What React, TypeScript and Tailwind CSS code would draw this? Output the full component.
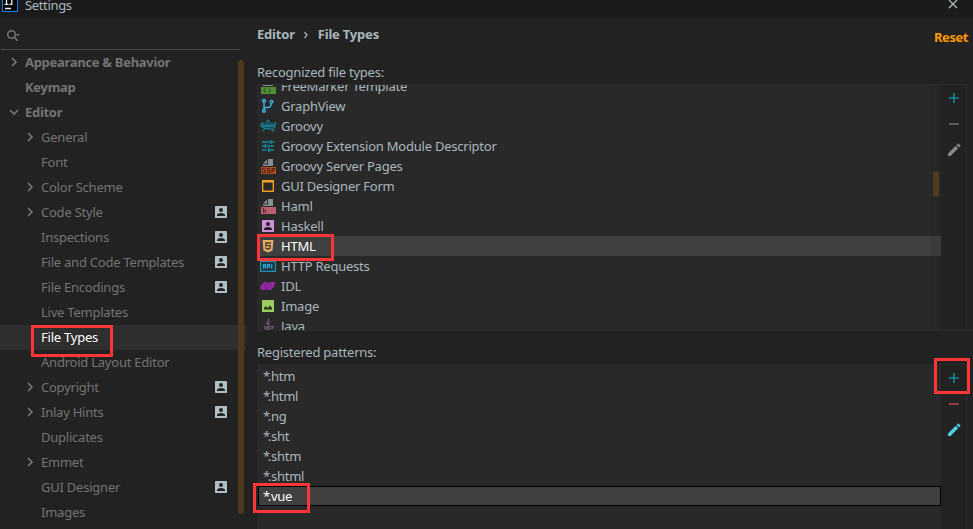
import React from "react";

type TreeItem = {
  label: string;
  level: 0 | 1;
  arrow?: "right" | "down";
  project?: boolean;
  selected?: boolean;
};

const tree: TreeItem[] = [
  { label: "Appearance & Behavior", level: 0, arrow: "right" },
  { label: "Keymap", level: 0 },
  { label: "Editor", level: 0, arrow: "down" },
  { label: "General", level: 1, arrow: "right" },
  { label: "Font", level: 1 },
  { label: "Color Scheme", level: 1, arrow: "right" },
  { label: "Code Style", level: 1, arrow: "right", project: true },
  { label: "Inspections", level: 1, project: true },
  { label: "File and Code Templates", level: 1, project: true },
  { label: "File Encodings", level: 1, project: true },
  { label: "Live Templates", level: 1 },
  { label: "File Types", level: 1, selected: true },
  { label: "Android Layout Editor", level: 1 },
  { label: "Copyright", level: 1, arrow: "right", project: true },
  { label: "Inlay Hints", level: 1, arrow: "right", project: true },
  { label: "Duplicates", level: 1 },
  { label: "Emmet", level: 1, arrow: "right" },
  { label: "GUI Designer", level: 1, project: true },
  { label: "Images", level: 1 },
];

function Chevron({ dir }: { dir: "right" | "down" }) {
  return (
    <svg width="10" height="10" viewBox="0 0 10 10" fill="none" stroke="#777" strokeWidth="1.6">
      <path d={dir === "right" ? "M3 1l4 4-4 4" : "M1 3l4 4 4-4"} />
    </svg>
  );
}

function Person({ color, size }: { color: string; size: number }) {
  return (
    <svg width={size} height={size} viewBox="0 0 12 12">
      <rect width="12" height="12" rx="0.7" fill={color} />
      <circle cx="6" cy="4.1" r="2" fill="#222" />
      <path d="M2 10V9c0-1.4 2.2-2.1 4-2.1S10 7.600 10 9v1z" fill="#222" />
    </svg>
  );
}

function Icon({ children }: { children: React.ReactNode }) {
  return (
    <svg width="16" height="16" viewBox="0 0 16 16" fill="none" className="shrink-0">
      {children}
    </svg>
  );
}

const page = (
  <>
    <path d="M8 1h5v7H3V6.500h5z" fill="#848e93" />
    <path d="M3 5.500L7 1.500v4z" fill="#848e93" />
  </>
);

const fileTypes: { label: string; icon: React.ReactNode }[] = [
  {
    label: "FreeMarker Template",
    icon: (
      <Icon>
        {page}
        <path d="M1 9h15v7H1z" fill="#4f8f36" />
        <path d="M6 10.500L3.500 12.500 6 14.500M8.500 10.500l2.500 2-2.500 2" stroke="#263a1d" />
      </Icon>
    ),
  },
  {
    label: "GraphView",
    icon: (
      <Icon>
        <g stroke="#40b6e8" strokeWidth="1.400">
          <circle cx="4" cy="2.800" r="1.400" />
          <circle cx="11.500" cy="3.800" r="1.400" />
          <circle cx="4" cy="12.800" r="1.400" />
          <path d="M4 4.200v7.200M4 9.500h3.500c2.500 0 3.700-1.500 3.900-4.300" />
        </g>
      </Icon>
    ),
  },
  {
    label: "Groovy",
    icon: (
      <Icon>
        <path d="M4.500 5l2.200-1.200L8 2l1.400 1.800L12 5l3.500-1v6.500l-2.800-.3 1.300 3-3.800-2.200L8 10.700 2.500 13.500 4 10.500 1 10 0 8l1-3 1.500-1z" fill="#154c5a" />
        <path d="M3.800 5H2L1 7.500l1 1.500h2V7.200H2.700M5.500 9V7.300l1.500-.5M7.500 7h1.200v1.600H7.500zM9.800 7H11v1.600H9.800zM11.800 6.500l.8 2 1-2M15 6.500L14.200 10M2.500 13.500L5 10l3 .7 2.500.3 3.500 2.200-1.300-3M6 4.500L8 2l2 2.500M15.300 4v3" stroke="#2797ad" strokeWidth=".8" />
      </Icon>
    ),
  },
  {
    label: "Groovy Extension Module Descriptor",
    icon: (
      <Icon>
        <path d="M2 4h7M10.500 4H14M2 8h3.500M7 8h7M2 12h4.500M9 12h5M10.500 2v4M5.500 6v4M8.700 10v4" stroke="#118da0" strokeWidth="1.500" />
      </Icon>
    ),
  },
  {
    label: "Groovy Server Pages",
    icon: (
      <Icon>
        {page}
        <path d="M1 9h15v7H1z" fill="#b04d22" />
        <path d="M5.500 10.500h-3v4h3v-2H4M10 10.500H7.500v2H10v2H7M12 15v-4.500h2.500v2.200H12" stroke="#4a2111" />
      </Icon>
    ),
  },
  {
    label: "GUI Designer Form",
    icon: (
      <Icon>
        <path d="M2.700 2.700h10.600v10.600H2.700z" stroke="#f2a01f" strokeWidth="1.400" />
        <path d="M2 2h12v2.500H2z" fill="#f2a01f" />
      </Icon>
    ),
  },
  {
    label: "Haml",
    icon: (
      <Icon>
        {page}
        <path d="M1 9h15v7H1z" fill="#b96070" />
        <path d="M3.500 10v5M3.500 12.300h2V15" stroke="#542832" />
      </Icon>
    ),
  },
  {
    label: "Haskell",
    icon: (
      <span className="flex size-4 shrink-0 items-center justify-center">
        <Person color="#cf8fd9" size={12} />
      </span>
    ),
  },
  {
    label: "HTML",
    icon: (
      <Icon>
        <path d="M2.500 2h11l-1 10.500L8 14.500l-4.500-2z" fill="#e3ac66" />
        <path d="M11 5H5.800V7.700h4.500l-.3 2.600L8 11.200l-2.200-.8V9.300" stroke="#4a3a28" strokeWidth="1.300" />
      </Icon>
    ),
  },
  {
    label: "HTTP Requests",
    icon: (
      <Icon>
        <path d="M.6 2.600h14.800v10.800H.6z" fill="#24343b" stroke="#1d8fba" strokeWidth="1.100" />
        <path d="M.5 2h15v2H.5z" fill="#1d8fba" />
        <path d="M3.500 10.500V6.500h2v4M3.500 8.800h2M7.500 10.500v-4h2v2.300h-2M11.700 6v4.500" stroke="#26a9df" strokeWidth="1.200" />
      </Icon>
    ),
  },
  {
    label: "IDL",
    icon: (
      <Icon>
        <path d="M0 8.500L4 4h4L7 6l3-2h5.500L14 8.500 11 12H7l1-2.500L5.500 12H1z" fill="#9529a5" />
        <path d="M3.500 8.500L7 5M7.500 11l4.500-6M4 12l3-4" stroke="#65216f" strokeWidth=".7" />
      </Icon>
    ),
  },
  {
    label: "Image",
    icon: (
      <Icon>
        <rect x="2" y="2" width="12" height="12" rx=".6" fill="#9dcc62" />
        <path d="M4 11.500V10l2-2 1.700 2.200L9.800 7.500 12 10v1.500z" fill="#263019" />
      </Icon>
    ),
  },
  {
    label: "Java",
    icon: (
      <Icon>
        <path d="M8.500 0.500c1 2-3 3-1 6M9.700 3.500C7.200 5 9.700 5.500 8.200 7.500M4 8.500c1 1 6 1 7 0M4.500 10.500c2 1 4.500 1 6 0M11.500 8.500c3-1 2 2 0 2M3 12c-3 1.500 8 2.500 10 0" stroke="#9673a6" strokeWidth="1" />
      </Icon>
    ),
  },
];

const patterns = [".htm", ".html", ".ng", ".sht", ".shtm", ".shtml", ".vue"];

function Toolbar({ minus, pencil }: { minus: string; pencil: string }) {
  return (
    <div className="flex w-[26px] shrink-0 flex-col items-center gap-[10px] border-t border-r border-[#2b2b2b] pl-px pt-[5px]">
      <Icon>
        <path d="M3 8h10M8 3v10" stroke="#0d8796" strokeWidth="1.700" />
      </Icon>
      <Icon>
        <path d="M3 8h10" stroke={minus} strokeWidth="1.800" />
      </Icon>
      <Icon>
        <path d="M2 11.500l7.700-7.700 2.500 2.500L4.500 14H2zM10.500 3l1.200-1.200q.5-.5 1 0l1.500 1.500q.5.500 0 1L13 5.500z" fill={pencil} />
      </Icon>
    </div>
  );
}

export default function App() {
  return (
    <div className="relative flex h-[529px] w-[973px] flex-col overflow-hidden bg-[#222] font-['Noto_Sans','Open_Sans',sans-serif] text-[13px] tracking-[-0.23px] text-[#a9b7bf]">
      <header className="flex h-[18px] shrink-0 items-start justify-between bg-[#1b1b1b]">
        <div className="flex items-start gap-[7px] pl-[2px]">
          <svg width="16" height="12" viewBox="0 0 16 12">
            <path d="M0 0h16v12H0z" fill="#1681ee" />
            <path d="M1 0h14v11H1z" fill="#050505" />
            <path d="M2.500 4.300h4M4.500 0v4.300M7.500 4.300H9.800V0M3 8.500h6" stroke="#eee" strokeWidth="1.300" fill="none" />
          </svg>
          <span className="-mt-[5px] leading-5 tracking-[-0.35px]">Settings</span>
        </div>
        <svg className="mr-[15px]" width="10" height="10" viewBox="0 0 10 10">
          <path d="M1 0l8 8M9 0L1 8" stroke="#b7c3ca" strokeWidth="1.200" />
        </svg>
      </header>

      <div className="flex min-h-0 flex-1">
        <aside className="flex w-[246px] shrink-0 flex-col text-[#747474]">
          <div className="mx-px flex h-8 w-[239px] shrink-0 items-center border-b border-[#484848] pl-[5px] pt-1">
            <svg width="16" height="14" viewBox="0 0 16 14" fill="none">
              <circle cx="5.500" cy="5.500" r="3.800" stroke="#777" strokeWidth="1.500" />
              <path d="M8.200 8.200l3.500 3.500" stroke="#777" strokeWidth="1.600" />
              <path d="M9.500 5h4.500l-2.200 2.200z" fill="#777" />
            </svg>
          </div>
          <nav>
            {tree.map((t) => (
              <div
                key={t.label}
                className={`flex h-[25px] items-center pr-[19px] ${t.level === 0 ? "pl-[9px] font-bold tracking-[-0.3px]" : "pl-[25px]"} ${t.selected ? "bg-[#2e2e2e] text-white" : ""}`}
              >
                <span className="flex w-4 shrink-0 pb-px">{t.arrow && <Chevron dir={t.arrow} />}</span>
                <span className="flex-1 whitespace-nowrap">{t.label}</span>
                {t.project && (
                  <span className="pb-[2px]">
                    <Person color="#b0bec5" size={12} />
                  </span>
                )}
              </div>
            ))}
          </nav>
        </aside>

        <main className="flex min-w-0 flex-1 flex-col pl-[11px]">
          <div className="flex h-[44px] shrink-0 items-start justify-between pr-[5px] pt-[7px] font-bold">
            <div className="flex items-center tracking-[-0.2px]">
              <span>Editor</span>
              <svg className="mx-[8.500px]" width="6" height="8" viewBox="0 0 6 8" fill="none">
                <path d="M1.500 1L4 4 1.500 7" stroke="#a9b7bf" strokeWidth="1.200" />
              </svg>
              <span>File Types</span>
            </div>
            <span className="mt-[3px] tracking-[-0.45px] text-[#ff9800]">Reset</span>
          </div>
          <div className="h-[22px] shrink-0 leading-[21px]">Recognized file types:</div>

          <section className="flex h-[247px] shrink-0 border-b border-[#2b2b2b]">
            <div className="relative w-[684px] overflow-hidden border-t border-[#2b2b2b] bg-[#292929]">
              <div className="-mt-[9px]">
                {fileTypes.map((f) => (
                  <div
                    key={f.label}
                    className={`flex h-5 items-center gap-[5px] pl-[3px] ${f.label === "HTML" ? "bg-[#404040] text-white" : ""}`}
                  >
                    {f.icon}
                    <span className="whitespace-nowrap pt-[2px]">{f.label}</span>
                  </div>
                ))}
              </div>
              <div className="absolute inset-y-0 right-0 w-[10px] bg-[#222]/20" />
              <div className="absolute right-[2px] top-[86px] h-[26px] w-[6px] rounded-full bg-[#513b1d]" />
            </div>
            <Toolbar minus="#606060" pencil="#888" />
          </section>

          <div className="h-[33px] shrink-0 pt-[11px] leading-[21px]">Registered patterns:</div>

          <section className="flex min-h-0 flex-1">
            <div className="w-[684px] bg-[#292929] pl-px pt-[2px]">
              {patterns.map((p) => (
                <div
                  key={p}
                  className={`flex h-5 items-center border pl-1 ${p === ".vue" ? "border-black bg-[#404040] text-white" : "border-transparent"}`}
                >
                  <span className="pt-[2px]">
                    <span className="tracking-[-2.500px]">*</span>
                    {p}
                  </span>
                </div>
              ))}
            </div>
            <Toolbar minus="#a24141" pencil="#4dd0e1" />
          </section>
        </main>
      </div>

      <div className="absolute left-[238px] top-[60px] h-[454px] w-[6px] rounded-full bg-[#4f391c]" />
      <div className="absolute left-[31px] top-[325px] h-8 w-[82px] border-[3px] border-[#fc3636]" />
      <div className="absolute left-[257px] top-[234px] h-[27px] w-[77px] border-[3px] border-[#fc3636]" />
      <div className="absolute left-[934px] top-[358px] h-9 w-9 border-[3px] border-[#fc3636]" />
      <div className="absolute left-[253px] top-[483px] h-[30px] w-[57px] border-[3px] border-[#fc3636]" />
    </div>
  );
}
